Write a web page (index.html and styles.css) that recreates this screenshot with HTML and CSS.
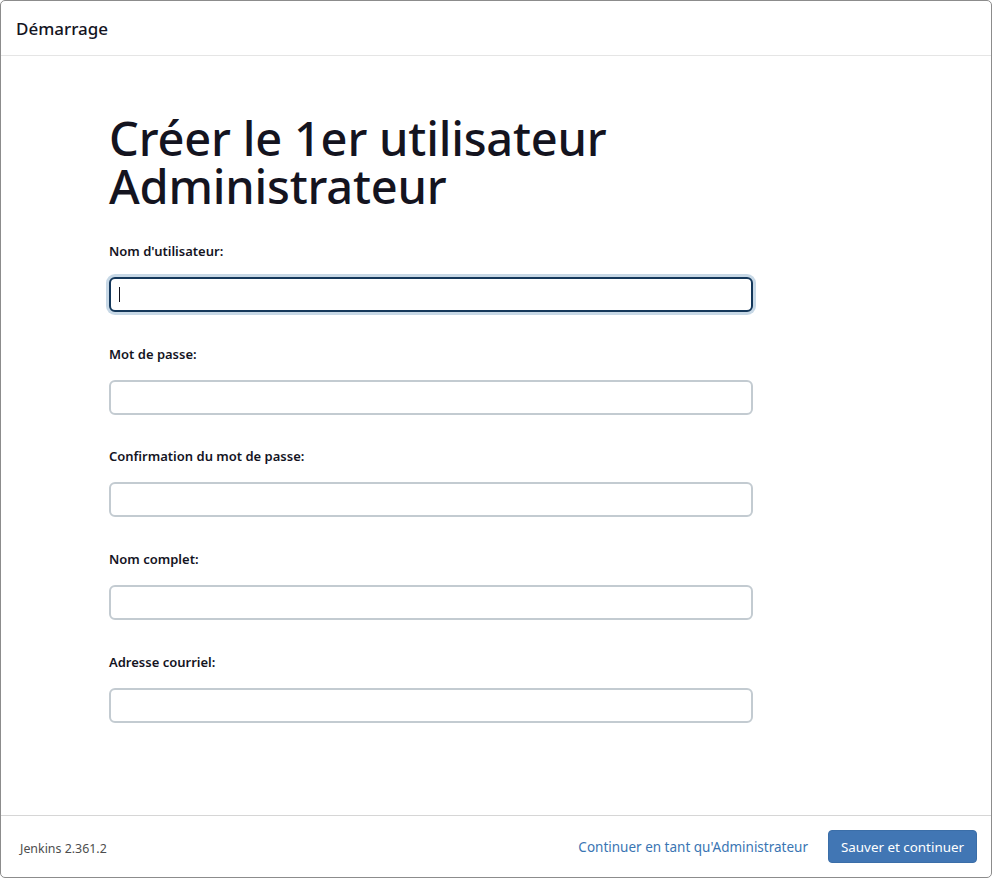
FILE: index.html
```html
<!DOCTYPE html>
<html lang="fr">
<head>
<meta charset="utf-8">
<title>Démarrage</title>
<link rel="stylesheet" href="styles.css">
</head>
<body>
<div class="modal">
  <header class="modal-header">Démarrage</header>
  <main class="modal-body">
    <h1 class="title">Créer le 1er utilisateur Administrateur</h1>
    <form class="form">
      <div class="field">
        <label class="label" for="u">Nom d'utilisateur:</label>
        <div class="input-wrap">
          <input class="input input-focus" id="u" type="text">
          <span class="caret"></span>
        </div>
      </div>
      <div class="field">
        <label class="label" for="p">Mot de passe:</label>
        <input class="input" id="p" type="password">
      </div>
      <div class="field">
        <label class="label" for="p2">Confirmation du mot de passe:</label>
        <input class="input" id="p2" type="password">
      </div>
      <div class="field">
        <label class="label" for="n">Nom complet:</label>
        <input class="input" id="n" type="text">
      </div>
      <div class="field">
        <label class="label" for="e">Adresse courriel:</label>
        <input class="input" id="e" type="text">
      </div>
    </form>
  </main>
  <footer class="modal-footer">
    <span class="version">Jenkins 2.361.2</span>
    <div class="actions">
      <a class="link" href="#">Continuer en tant qu'Administrateur</a>
      <button class="btn" type="button">Sauver et continuer</button>
    </div>
  </footer>
</div>
</body>
</html>
```
FILE: styles.css
```css
* { box-sizing: border-box; }
html, body { margin: 0; padding: 0; background: #fff; }
body {
  font-family: "Noto Sans", "Open Sans", sans-serif;
  color: #14141f;
}
.modal {
  width: 992px;
  height: 878px;
  border: 1px solid #8c8c8c;
  border-radius: 5px;
  display: flex;
  flex-direction: column;
  overflow: hidden;
}
.modal-header {
  height: 55px;
  border-bottom: 1px solid #e5e5e5;
  display: flex;
  align-items: center;
  padding: 1px 15px 0 15px;
  font-size: 17px;
  font-weight: 500;
}
.modal-body {
  flex: 1;
  padding: 58px 0 0 108px;
}
.title {
  margin: 0;
  font-size: 47px;
  line-height: 48px;
  font-weight: 500;
  width: 560px;
  letter-spacing: -0.2px;
}
.form {
  margin-top: 32px;
  width: 644px;
  display: flex;
  flex-direction: column;
  gap: 32.7px;
}
.field {
  display: flex;
  flex-direction: column;
}
.label {
  font-size: 13px;
  font-weight: 600;
  line-height: 18px;
  margin-bottom: 17px;
}
.input-wrap {
  position: relative;
}
.input {
  display: block;
  height: 35px;
  width: 644px;
  border: 2px solid #c3cbd1;
  border-radius: 6px;
  font-size: 14px;
  padding: 0 8px;
  outline: none;
  background: #fff;
}
.input-focus {
  border-color: #14375a;
  box-shadow: 0 0 0 3px #c7d8e6;
}
.caret {
  position: absolute;
  left: 10px;
  top: 10px;
  width: 1px;
  height: 15px;
  background: #14141f;
}
.modal-footer {
  height: 62px;
  border-top: 1px solid #d6d6d6;
  display: flex;
  align-items: center;
  justify-content: space-between;
  padding: 0 14px 0 19px;
}
.version {
  font-size: 12.4px;
  color: #4d4d4d;
  padding-top: 4px;
}
.actions {
  display: flex;
  align-items: center;
  gap: 20px;
}
.link {
  color: #3a75b3;
  text-decoration: none;
  font-size: 13.5px;
}
.btn {
  height: 33px;
  width: 149px;
  background: #4176b4;
  color: #fff;
  border: 1px solid #3b6ea8;
  border-radius: 4px;
  font-family: inherit;
  font-size: 13.4px;
  padding: 0;
}
```
